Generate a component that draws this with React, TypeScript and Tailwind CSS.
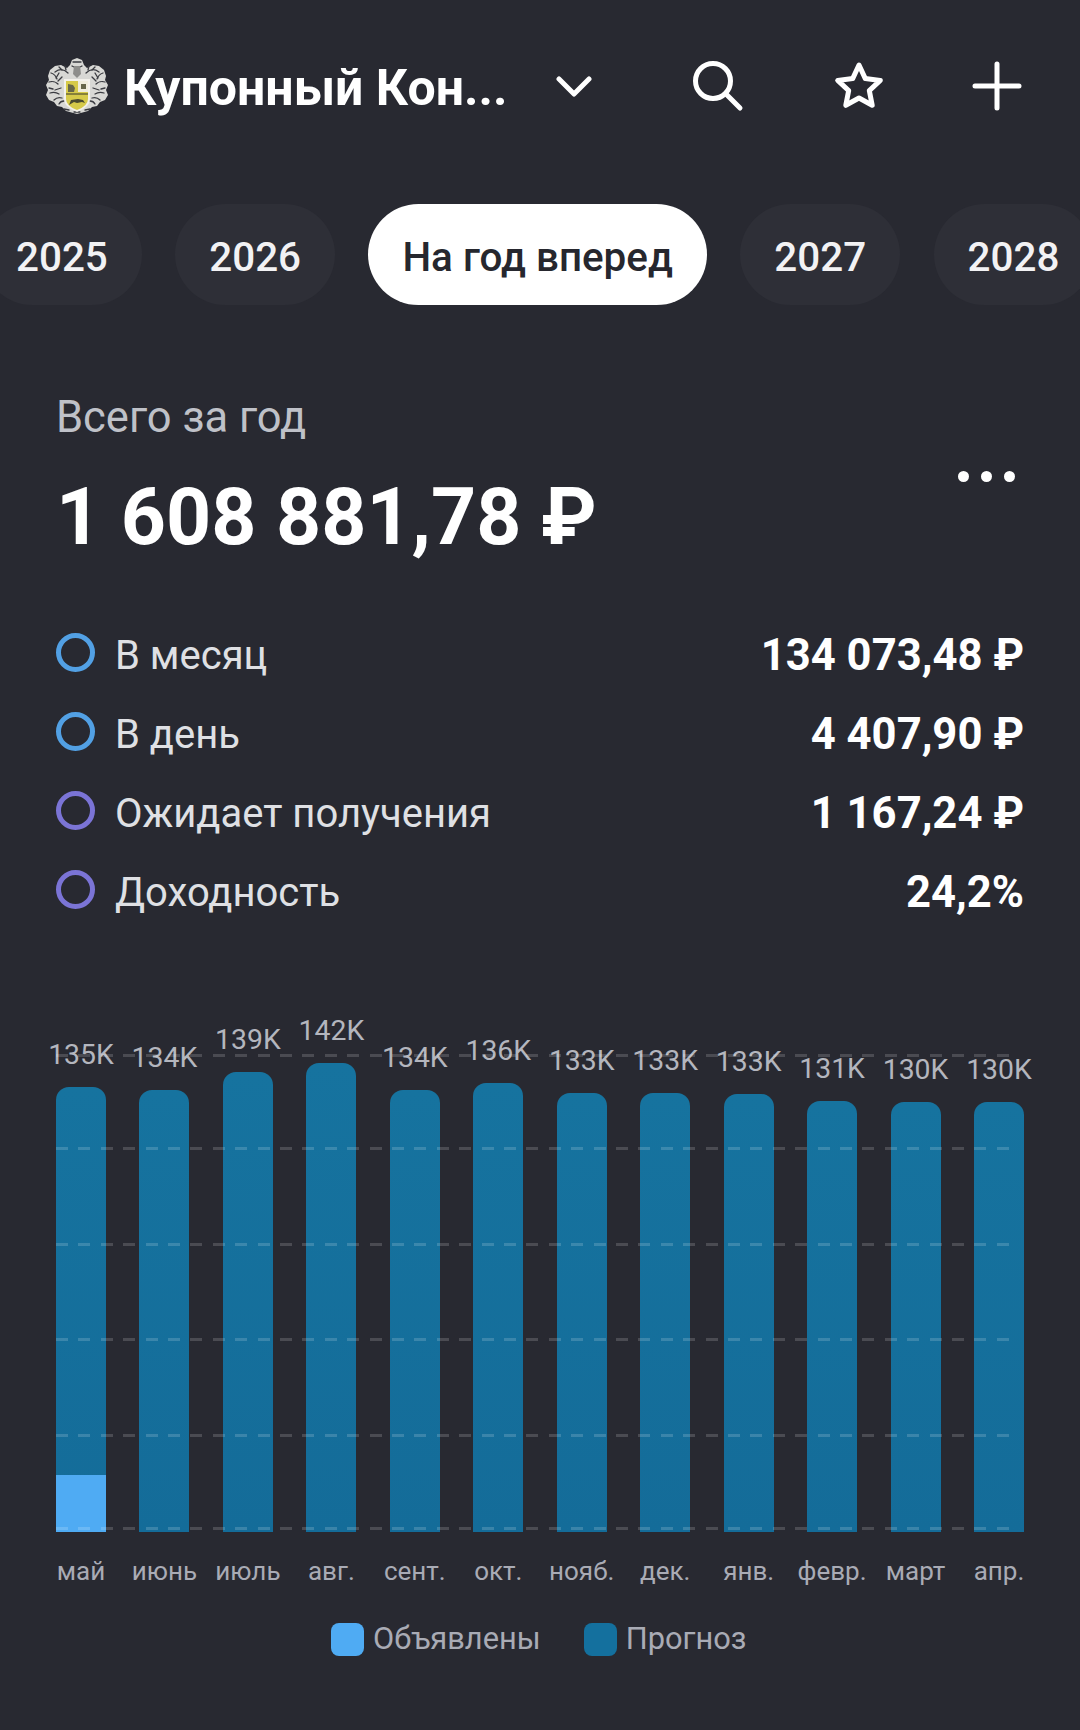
import type { ReactNode } from "react";

const YEARS_LEFT = ["2025", "2026"];
const YEARS_RIGHT = ["2027", "2028"];

const ROWS = [
  { label: "В месяц", value: "134 073,48 ₽", ring: "border-[#52a0e4]" },
  { label: "В день", value: "4 407,90 ₽", ring: "border-[#52a0e4]" },
  { label: "Ожидает получения", value: "1 167,24 ₽", ring: "border-[#7b74d6]" },
  { label: "Доходность", value: "24,2%", ring: "border-[#7b74d6]" },
];

const BARS = [
  { month: "май", label: "135K", height: 445, declared: 57 },
  { month: "июнь", label: "134K", height: 442 },
  { month: "июль", label: "139K", height: 460 },
  { month: "авг.", label: "142K", height: 469 },
  { month: "сент.", label: "134K", height: 442 },
  { month: "окт.", label: "136K", height: 449 },
  { month: "нояб.", label: "133K", height: 439 },
  { month: "дек.", label: "133K", height: 439 },
  { month: "янв.", label: "133K", height: 438 },
  { month: "февр.", label: "131K", height: 431 },
  { month: "март", label: "130K", height: 430 },
  { month: "апр.", label: "130K", height: 430 },
];

const GRID_LINES = ["top-0", "top-[93px]", "top-[189px]", "top-[284px]", "top-[380px]", "top-[473px]"];

function Logo() {
  return (
    <svg width="63" height="56" viewBox="0 0 63 56" className="shrink-0">
      {/* wreath silhouette */}
      <path
        d="M32 0l5 2 2 5 3 3 6-3 6 1 5 4 2 6-1 4 3 5-2 5 2 5-3 5-5 2-3 4-5 1-4 4-11 3-11-3-4-4-5-1-3-4-5-2-3-5 2-5-2-5 3-5-1-4 2-6 5-4 6-1 6 3 3-3 2-5z"
        fill="#d8d8d5"
      />
      <g fill="none" stroke="#3a3b41" strokeWidth="1.3" strokeLinecap="round">
        <path d="M28 4h8M27 8c3 2 7 2 10 0M23 15c-4-4-9-4-13-1M41 15c4-4 9-4 13-1" />
        <path d="M14 9l3 3M50 9l-3 3M20 8l1 4M44 8l-1 4" />
        <path d="M6 15c3 1 5 3 6 6M58 15c-3 1-5 3-6 6M4 24c3-1 7 0 9 2M60 24c-3-1-7 0-9 2" />
        <path d="M4 30l4 1M60 30l-4 1M5 35c3-1 6-1 9 1M59 35c-3-1-6-1-9 1M9 42c2-2 5-3 8-2M55 42c-2-2-5-3-8-2" />
        <path d="M14 46c1-2 3-3 5-3M50 46c-1-2-3-3-5-3M19 51l5 1M45 51l-5 1M29 54h6" />
        <path d="M17 19l-4 4M47 19l4 4M16 30l-6 2M48 30l6 2M11 20l3-5M53 20l-3-5" />
      </g>
      <path d="M29 8h6l1 8-4 4-4-4z" fill="#8d8d8b" />
      {/* shield */}
      <path d="M19 21h26v20q0 8-13 13q-13-5-13-13z" fill="#f3f1ec" />
      <path d="M21 23h22v18q0 7-11 11q-11-4-11-11z" fill="#d6ca4a" />
      <path d="M33 23h10v11H33z" fill="#efecdc" />
      <path d="M23 26l5 1 2 3-1 4-6 0zM36 26h5v5h-5z" fill="#66664a" />
      <path d="M21 36h22" stroke="#5a5830" strokeWidth="1.3" />
      <path d="M24 47l2-5 7-1 5 1 2 3-3-1-5 1-3-1z" fill="#4a4a30" />
    </svg>
  );
}

function IconSlot({ className, children }: { className: string; children: ReactNode }) {
  return <div className={`flex shrink-0 items-center justify-center ${className}`}>{children}</div>;
}

function Header() {
  return (
    <div className="mt-[57px] flex h-[58px] items-center pl-[45px]">
      <Logo />
      <div className="ml-[16px] mt-[4px] w-[390px] shrink-0 whitespace-nowrap text-[50px] font-bold leading-[58px] text-white">
        Купонный Кон...
      </div>
      <IconSlot className="ml-[30px] mt-[2px] w-[60px]">
        <svg width="36" height="22" viewBox="0 0 36 22" fill="none" stroke="white" strokeWidth="5" strokeLinecap="round" strokeLinejoin="round">
          <path d="M3 3l15 15L33 3" />
        </svg>
      </IconSlot>
      <IconSlot className="ml-[84px] w-[60px]">
        <svg width="52" height="52" viewBox="0 0 52 52" fill="none" stroke="white" strokeWidth="5" strokeLinecap="round">
          <circle cx="21" cy="21" r="17.5" />
          <path d="M34 34l14 14" />
        </svg>
      </IconSlot>
      <IconSlot className="ml-[81px] w-[60px]">
        <svg width="50" height="50" viewBox="0 0 50 50" fill="none" stroke="white" strokeWidth="5" strokeLinejoin="round">
          <path d="M25 4l6.3 13.6 15 1.8-11 10.2 2.9 14.7L25 37l-13.2 7.3 2.9-14.7-11-10.2 15-1.8z" />
        </svg>
      </IconSlot>
      <IconSlot className="ml-[78px] w-[60px]">
        <svg width="50" height="50" viewBox="0 0 50 50" fill="none" stroke="white" strokeWidth="5" strokeLinecap="round">
          <path d="M25 3v44M3 25h44" />
        </svg>
      </IconSlot>
    </div>
  );
}

function YearPill({ children, active }: { children: ReactNode; active?: boolean }) {
  return (
    <div
      className={`flex h-[101px] shrink-0 items-center rounded-full px-[34px] pt-[8px] text-[40.4px] font-medium ${
        active ? "bg-white text-[#26272e]" : "bg-[#2e2f37] text-[#f2f2f4]"
      }`}
    >
      {children}
    </div>
  );
}

function Bar({ item }: { item: (typeof BARS)[number] }) {
  return (
    <div className="relative flex w-[50px] flex-col items-center">
      <div className="mb-[16px] whitespace-nowrap text-[28.4px] leading-[32px] text-[#b4b6be]">{item.label}</div>
      <div
        className="flex w-full flex-col justify-end overflow-hidden rounded-t-[13px] bg-gradient-to-b from-[#16739f] to-[#146c99]"
        style={{ height: item.height }}
      >
        {item.declared ? <div className="w-full bg-[#4fabf3]" style={{ height: item.declared }} /> : null}
      </div>
    </div>
  );
}

function Chart() {
  return (
    <div className="relative mx-[56px] mt-[75px] h-[540px]">
      <div className="absolute inset-x-0 bottom-0 flex items-end justify-between">
        {BARS.map((item) => (
          <Bar key={item.month} item={item} />
        ))}
      </div>
      <div className="absolute left-0 right-[12px] top-[62px]">
        {GRID_LINES.map((pos) => (
          <div
            key={pos}
            className={`absolute inset-x-0 h-[3px] bg-[repeating-linear-gradient(90deg,rgba(255,255,255,0.16)_0_12px,transparent_12px_22.4px)] ${pos}`}
          />
        ))}
      </div>
    </div>
  );
}

export default function App() {
  return (
    <div className="flex h-[1730px] w-[1080px] flex-col overflow-hidden bg-[#282931] font-['Roboto',sans-serif]">
      <Header />

      <div className="ml-[-18px] mt-[89px] flex gap-[33.4px]">
        {YEARS_LEFT.map((y) => (
          <YearPill key={y}>{y}</YearPill>
        ))}
        <YearPill active>На год вперед</YearPill>
        {YEARS_RIGHT.map((y) => (
          <YearPill key={y}>{y}</YearPill>
        ))}
      </div>

      <div className="relative mt-[88px] px-[56px]">
        <div className="text-[43.5px] leading-[50px] text-[#bfc1c8]">Всего за год</div>
        <div className="mt-[29px] text-[78.8px] font-bold leading-[90px] text-white">1 608 881,78 ₽</div>
        <div className="absolute right-[65px] top-[78px] flex gap-[12px]">
          <span className="h-[11px] w-[11px] rounded-full bg-white" />
          <span className="h-[11px] w-[11px] rounded-full bg-white" />
          <span className="h-[11px] w-[11px] rounded-full bg-white" />
        </div>
      </div>

      <div className="mt-[70px] flex flex-col gap-[31px] px-[56px]">
        {ROWS.map((row) => (
          <div key={row.label} className="flex h-[48px] items-center">
            <div className={`mb-[8px] h-[39px] w-[39px] shrink-0 rounded-full border-[5px] ${row.ring}`} />
            <div className="ml-[20px] text-[40px] leading-[48px] text-[#dfe0e4]">{row.label}</div>
            <div className="ml-auto text-[43.6px] font-bold leading-[48px] text-white">{row.value}</div>
          </div>
        ))}
      </div>

      <Chart />

      <div className="mx-[56px] mt-[22px] flex justify-between">
        {BARS.map((item) => (
          <div key={item.month} className="flex w-[50px] justify-center whitespace-nowrap text-[26px] leading-[34px] text-[#a9abb5]">
            {item.month}
          </div>
        ))}
      </div>

      <div className="mt-[31px] flex items-center pl-[331px] text-[30.8px] leading-[40px] text-[#a9abb5]">
        <span className="h-[33px] w-[33px] rounded-[8px] bg-[#4fabf3]" />
        <span className="ml-[9px]">Объявлены</span>
        <span className="ml-[43px] h-[33px] w-[33px] rounded-[8px] bg-[#14709e]" />
        <span className="ml-[9px]">Прогноз</span>
      </div>
    </div>
  );
}
